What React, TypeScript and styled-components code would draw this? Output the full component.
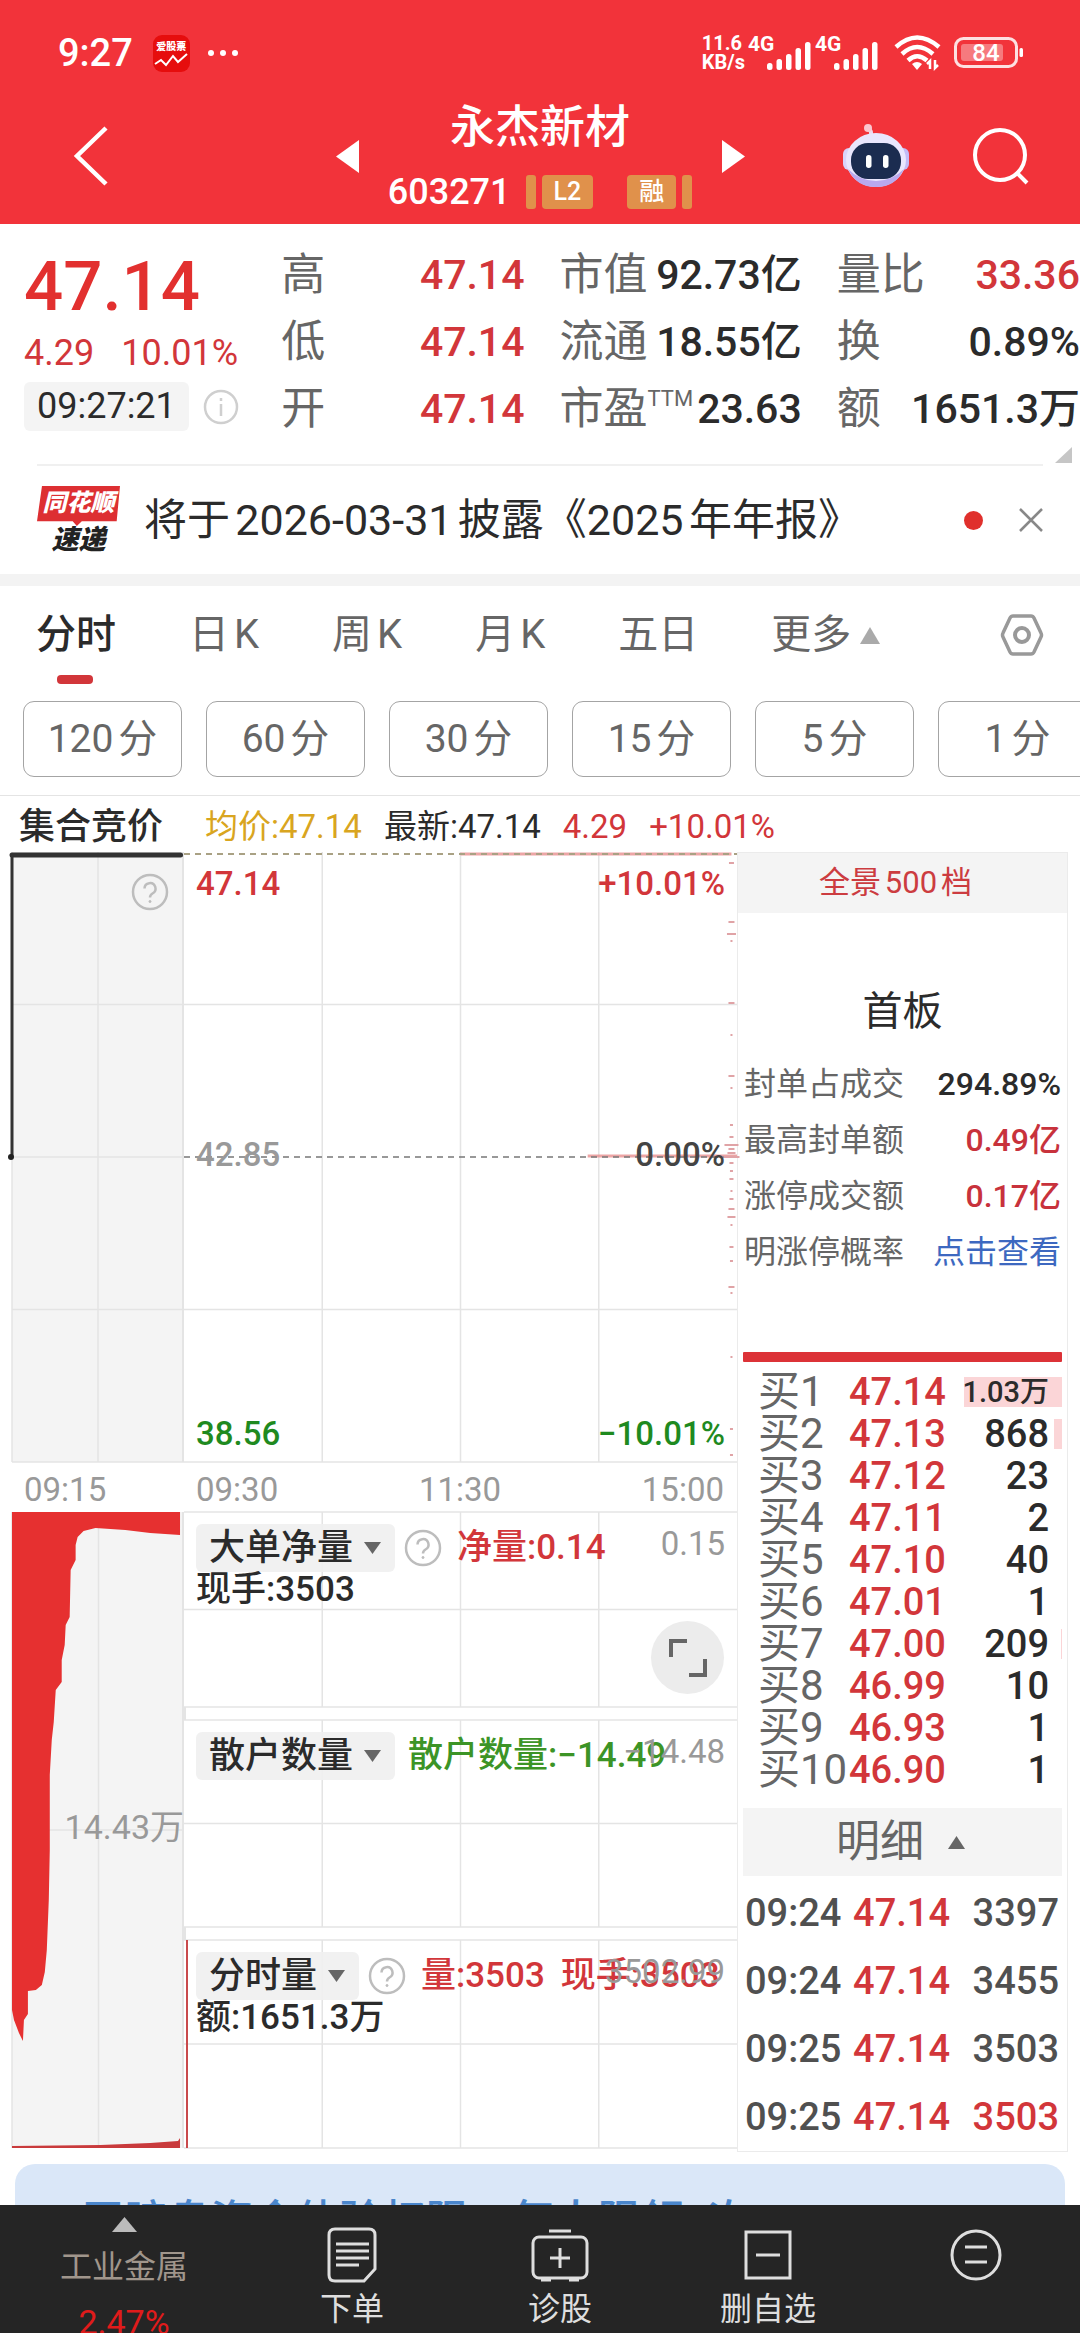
import React from "react";
import styled, { createGlobalStyle } from "styled-components";

const color = {
  brand: "#f2333a",
  up: "#d2363a",
  upStrong: "#e2302f",
  down: "#1f8a1f",
  ink: "#2b2b2b",
  text: "#505050",
  label: "#666666",
  muted: "#999999",
  line: "#e4e4e4",
  panel: "#f4f4f4",
};

const tones: Record<string, string> = {
  up: color.up,
  ink: color.ink,
  down: "#3c9426",
  text: color.text,
  muted: color.muted,
  avg: "#d9a520",
};

const GlobalStyle = createGlobalStyle`
  *, *::before, *::after { box-sizing: border-box; }
  body {
    margin: 0;
    background: #fff;
    color: ${color.ink};
    font-family: Roboto, "Noto Sans CJK SC", sans-serif;
    -webkit-font-smoothing: antialiased;
  }
  button, select { font: inherit; color: inherit; background: none; border: 0; margin: 0; padding: 0; }
  button { cursor: pointer; }
  a { text-decoration: none; }
  svg { display: block; flex: none; }
`;

const Page = styled.div`
  display: flex;
  flex-direction: column;
  min-height: 100vh;
  overflow-x: hidden;
`;

/* ---------- header ---------- */

const Header = styled.header`
  background: ${color.brand};
  color: #fff;
`;

const StatusBar = styled.div`
  display: flex;
  justify-content: space-between;
  align-items: center;
  height: 92px;
  padding: 14px 56px 0 58px;
`;

const StatusGroup = styled.div<{ $gap: number }>`
  display: flex;
  align-items: center;
  gap: ${(p) => p.$gap}px;
`;

const Clock = styled.time`
  padding-right: 3px;
  font-size: 38px;
  line-height: 40px;
  font-weight: 500;
`;

const AppBadge = styled.span`
  display: flex;
  flex-direction: column;
  align-items: center;
  width: 37px;
  height: 37px;
  padding-top: 6px;
  border-radius: 9px;
  background: #e60d0d;
  font-size: 10px;
  line-height: 12px;
  font-weight: 900;
`;

const NetSpeed = styled.span`
  font-size: 20px;
  line-height: 19px;
  font-weight: 700;
`;

const NavBar = styled.div`
  display: grid;
  grid-template-columns: 1fr auto 1fr;
  align-items: center;
  height: 132px;
  padding: 0 50px 4px;
`;

const IconButton = styled.button`
  display: flex;
  align-items: center;
  justify-content: center;
`;

const NavStart = styled.div`
  display: flex;
  padding-left: 22px;
`;

const Switcher = styled.div`
  display: grid;
  grid-template-columns: 24px 302px 24px;
  column-gap: 30px;
  align-items: center;
`;

const Heading = styled.div`
  display: flex;
  flex-direction: column;
  align-items: center;
  gap: 18px;
  padding-bottom: 2px;
`;

const Title = styled.h1`
  margin: 0;
  font-size: 45px;
  line-height: 56px;
  font-weight: 500;
`;

const CodeRow = styled.div`
  display: flex;
  align-items: center;
  gap: 6px;
  font-size: 36px;
  line-height: 36px;
`;

const Code = styled.span`
  padding-right: 9px;
  font-weight: 500;
`;

const Tag = styled.span`
  padding: 0 12px;
  border-radius: 4px;
  background: #e0914b;
  font-size: 25px;
  line-height: 34px;
  font-weight: 500;
`;

const TagEdge = styled.span`
  width: 10px;
  height: 34px;
  border-radius: 3px;
  background: #e0914b;
`;

const TagGap = styled.span`
  width: 22px;
`;

const NavActions = styled.div`
  display: flex;
  justify-content: flex-end;
  align-items: center;
  gap: 62px;
`;

/* ---------- quote ---------- */

const Quote = styled.section`
  display: grid;
  grid-template-columns: 222fr 243fr 242fr 243fr;
  column-gap: 35px;
  padding: 17px 0 5px 24px;
`;

const PriceBlock = styled.div`
  display: flex;
  flex-direction: column;
`;

const Price = styled.strong`
  font-size: 69px;
  line-height: 92px;
  font-weight: 500;
  color: ${color.upStrong};
`;

const Change = styled.div`
  display: flex;
  gap: 27px;
  font-size: 36px;
  line-height: 40px;
  color: ${color.up};
`;

const TimeRow = styled.div`
  display: flex;
  align-items: center;
  gap: 14px;
  padding-top: 9px;
`;

const TimeBox = styled.time`
  padding: 0 13px;
  border-radius: 6px;
  background: ${color.panel};
  font-size: 36px;
  line-height: 49px;
`;

const Facts = styled.dl`
  display: flex;
  flex-direction: column;
  margin: 0;
`;

const Fact = styled.div`
  display: flex;
  justify-content: space-between;
  align-items: center;
  height: 67px;
  white-space: nowrap;
`;

const FactName = styled.dt`
  display: flex;
  font-size: 44px;
  line-height: 60px;
  color: ${color.label};
`;

const Superscript = styled.sup`
  font-size: 22px;
  line-height: 40px;
`;

const FactValue = styled.dd<{ $up?: boolean }>`
  margin: 0;
  font-size: 41px;
  line-height: 60px;
  font-weight: 500;
  color: ${(p) => (p.$up ? color.up : color.ink)};
`;

const Corner = styled.div`
  display: flex;
  justify-content: flex-end;
  height: 17px;
  padding-right: 8px;
`;

/* ---------- notice ---------- */

const Notice = styled.section`
  display: flex;
  align-items: center;
  height: 110px;
  margin: 0 37px;
  border-top: 2px solid #f0f0f0;
`;

const NoticeLogo = styled.span`
  display: flex;
  flex-direction: column;
  align-items: center;
  width: 83px;
  font-style: italic;
  font-weight: 900;
`;

const LogoTop = styled.span`
  width: 83px;
  height: 40px;
  clip-path: polygon(6% 0, 100% 0, 96% 88%, 54% 88%, 48% 100%, 43% 88%, 0 88%);
  background: #dd2f32;
  color: #fff;
  font-size: 24px;
  line-height: 35px;
  text-align: center;
`;

const LogoBottom = styled.span`
  font-size: 27px;
  line-height: 28px;
  color: #222;
`;

const NoticeText = styled.p`
  flex: 1;
  margin: 0;
  padding-left: 24px;
  font-size: 43px;
  line-height: 60px;
  white-space: nowrap;
  text-autospace: normal;
`;

const Dot = styled.span`
  width: 19px;
  height: 19px;
  margin-right: 36px;
  border-radius: 50%;
  background: #e0302c;
`;

const Band = styled.div`
  height: 12px;
  background: #f3f3f3;
`;

/* ---------- tabs ---------- */

const Tabs = styled.nav`
  display: flex;
  align-items: flex-start;
  gap: 73px;
  padding: 19px 36px 0;
`;

const Tab = styled.button<{ $active?: boolean; $end?: boolean }>`
  display: flex;
  align-items: center;
  gap: 9px;
  height: 79px;
  margin-left: ${(p) => (p.$end ? "auto" : "0")};
  padding-bottom: 19px;
  position: relative;
  font-size: 40px;
  line-height: 60px;
  font-weight: ${(p) => (p.$active ? 500 : 400)};
  color: ${(p) => (p.$active ? color.ink : color.label)};
  text-autospace: normal;

  &::after {
    content: "";
    display: ${(p) => (p.$active ? "block" : "none")};
    position: absolute;
    left: calc(50% - 19px);
    bottom: 0;
    width: 36px;
    height: 9px;
    border-radius: 4px;
    background: ${color.up};
  }
`;

const Chips = styled.div`
  display: flex;
  gap: 24px;
  padding: 17px 0 18px 23px;
  overflow: hidden;
  border-bottom: 1px solid ${color.line};
`;

const Chip = styled.button`
  flex: none;
  width: 159px;
  height: 76px;
  border: 1px solid #a4a4a4;
  border-radius: 11px;
  font-size: 39px;
  line-height: 60px;
  color: ${color.label};
  text-autospace: normal;
`;

/* ---------- chart board ---------- */

const Summary = styled.div`
  display: flex;
  align-items: center;
  height: 56px;
  padding: 5px 0 0 19px;
  gap: 22px;
  font-size: 33px;
  line-height: 48px;
`;

const SummaryTitle = styled.span`
  width: 164px;
  font-size: 36px;
  font-weight: 500;
`;

const Toned = styled.span<{ $tone: string }>`
  color: ${(p) => tones[p.$tone]};
`;

const Board = styled.main`
  display: grid;
  grid-template-columns: 172fr 553fr 331fr;
  padding: 0 12px;
`;

const Column = styled.div`
  display: flex;
  flex-direction: column;
  min-width: 0;
`;

const Plot = styled.div<{ $height: number; $shaded?: boolean }>`
  position: relative;
  display: flex;
  flex-direction: column;
  height: ${(p) => p.$height}px;
  background: ${(p) => (p.$shaded ? color.panel : "#fff")};
`;

const PlotArt = styled.svg`
  position: absolute;
  inset: 0;
  width: 100%;
  height: 100%;
  overflow: visible;
`;

const AxisTimes = styled.div<{ $inset: number }>`
  display: flex;
  justify-content: space-between;
  height: 50px;
  padding: 8px 13px 0 ${(p) => p.$inset}px;
  font-size: 33px;
  line-height: 40px;
  color: ${color.muted};
`;

const PriceLabels = styled.div`
  position: relative;
  display: flex;
  flex-direction: column;
  justify-content: space-between;
  height: 100%;
  padding: 12px 12px 8px 12px;
`;

const PriceLabel = styled.div<{ $left: string; $right: string; $lift?: boolean }>`
  display: flex;
  justify-content: space-between;
  padding-bottom: ${(p) => (p.$lift ? 8 : 0)}px;
  font-size: 33px;
  line-height: 40px;
  font-weight: 500;
  color: ${(p) => p.$left};

  span:last-child {
    color: ${(p) => p.$right};
  }
`;

const HelpCorner = styled.div`
  position: relative;
  display: flex;
  justify-content: flex-end;
  padding: 21px 15px 0;
`;

const MidVolume = styled.span`
  position: relative;
  margin: auto 0;
  padding-bottom: 6px;
  font-size: 34px;
  line-height: 40px;
  text-align: right;
  color: ${color.muted};
`;

const Indicator = styled.div`
  position: relative;
  padding: 12px 13px 0 12px;
  font-size: 35px;
  line-height: 36px;
  font-weight: 500;
`;

const IndicatorRow = styled.div`
  display: flex;
  align-items: center;
  gap: 9px;
  height: 48px;
  white-space: nowrap;
`;

const Readings = styled.div<{ $indent?: boolean }>`
  display: flex;
  gap: 16px;
  padding-left: ${(p) => (p.$indent ? 6 : 4)}px;
`;

const Picker = styled.label`
  display: flex;
  align-items: center;
  gap: 10px;
  height: 48px;
  padding: 0 14px 0 13px;
  border-radius: 6px;
  background: rgba(240, 240, 240, 0.9);
`;

const PickerSelect = styled.select`
  appearance: none;
  font-size: 36px;
  line-height: 48px;
  outline: none;
`;

const Scale = styled.span`
  position: absolute;
  top: 12px;
  right: 12px;
  font-size: 33px;
  line-height: 40px;
  font-weight: 400;
  color: ${color.muted};
`;

const Expand = styled.button`
  position: absolute;
  right: 13px;
  top: 109px;
  display: flex;
  align-items: center;
  justify-content: center;
  width: 73px;
  height: 73px;
  border-radius: 50%;
  background: #ececec;
`;

const PanelGap = styled.div`
  height: 13px;
`;

/* ---------- order book ---------- */

const Side = styled.aside`
  display: flex;
  flex-direction: column;
  border: 1px solid #ebebeb;
`;

const DepthButton = styled.button`
  height: 60px;
  padding-right: 14px;
  background: ${color.panel};
  font-size: 31px;
  line-height: 60px;
  color: #cc3c40;
  text-autospace: normal;
`;

const SideTitle = styled.h2`
  margin: 0;
  padding: 69px 0 14px;
  font-size: 40px;
  line-height: 60px;
  font-weight: 400;
  text-align: center;
`;

const LimitStats = styled.dl`
  margin: 0;
  padding: 0 6px 72px;
`;

const LimitStat = styled.div`
  display: flex;
  justify-content: space-between;
  font-size: 32px;
  line-height: 56px;
  white-space: nowrap;
`;

const LimitName = styled.dt`
  color: ${color.label};
`;

const LimitValue = styled.dd<{ $up?: boolean }>`
  margin: 0;
  font-weight: 500;
  color: ${(p) => (p.$up ? "#c8323c" : color.ink)};
`;

const LimitLink = styled.a`
  font-weight: 400;
  color: #3d68c0;
`;

const Ratio = styled.div`
  height: 10px;
  margin: 0 5px;
  border-radius: 1px;
  background: #dc3237;
`;

const Book = styled.table`
  margin: 9px 5px 0;
  border-collapse: collapse;
`;

const Cell = styled.td<{ $tone: string; $align?: string; $size?: number; $pad?: number; $height: number }>`
  padding: 0 ${(p) => p.$pad ?? 0}px 0 0;
  height: ${(p) => p.$height}px;
  font-size: ${(p) => p.$size ?? 38}px;
  line-height: ${(p) => p.$height}px;
  font-weight: 500;
  text-align: ${(p) => p.$align ?? "left"};
  color: ${(p) => tones[p.$tone]};
  white-space: nowrap;
`;

const LevelCell = styled.th`
  width: 106px;
  padding: 0 0 0 15px;
  font-size: 42px;
  line-height: 42px;
  font-weight: 400;
  text-align: left;
  color: ${color.label};
  white-space: nowrap;
`;

const VolumeCell = styled(Cell)<{ $fill: number }>`
  background: linear-gradient(#fbd5d7, #fbd5d7) right center / ${(p) => p.$fill}px 30px no-repeat;
`;

const DetailButton = styled.button`
  display: flex;
  align-items: center;
  justify-content: center;
  gap: 24px;
  height: 68px;
  margin: 17px 5px 3px;
  padding-right: 4px;
  background: ${color.panel};
  font-size: 44px;
  line-height: 60px;
  color: ${color.label};
`;

const Trades = styled.table`
  margin: 0 5px 0 7px;
  border-collapse: collapse;
`;

/* ---------- promo + footer ---------- */

const Promo = styled.section`
  display: flex;
  align-items: center;
  justify-content: space-between;
  height: 114px;
  margin: 12px 15px 0;
  padding: 0 38px 0 42px;
  border-radius: 20px;
  background: #dae7f8;
  font-size: 43px;
  line-height: 60px;
  font-weight: 500;
  color: #4a86cc;
`;

const Footer = styled.footer`
  position: fixed;
  inset: auto 0 0 0;
  display: grid;
  grid-template-columns: 248fr 208fr 208fr 208fr 208fr;
  height: 128px;
  overflow: hidden;
  background: #252525;
  color: #dedede;
`;

const FooterItem = styled.button`
  display: flex;
  flex-direction: column;
  align-items: center;
  gap: 4px;
  padding-top: 22px;
  font-size: 32px;
  line-height: 44px;
`;

const Sector = styled.a`
  display: flex;
  flex-direction: column;
  align-items: center;
  padding-top: 12px;
  font-size: 32px;
  line-height: 55px;
  color: #a0968c;
`;

const SectorName = styled.span`
  padding-top: 8px;
`;

const SectorChange = styled.span`
  font-size: 34px;
  color: #e01b1b;
`;

/* ---------- drawings ---------- */

const Signal = () => (
  <svg width="64" height="40" viewBox="0 -4 64 40">
    <text x="0" y="14" fontSize="21" fontWeight="700" fill="#fff">4G</text>
    {[7, 11, 16, 22, 28].map((h, i) => (
      <rect key={h} x={19 + i * 9.5} y={33 - h} width="5.5" height={h} rx="2.5" fill="#fff" />
    ))}
  </svg>
);

const Wifi = () => (
  <svg width="48" height="36" viewBox="0 0 48 36" fill="none" stroke="#fff" strokeWidth="4.500">
    <path d="M2 12Q23-7 45 12" />
    <path d="M8 19Q23 5 39 19" />
    <path d="M14 25.500Q23 17 33 25.500" />
    <path d="M23 35l-5-6q5-4 10 0z" fill="#fff" stroke="none" />
    <path d="M36 34v-8l-3 3M41 25v8l3-3" strokeWidth="2.500" />
  </svg>
);

const Battery = () => (
  <svg width="70" height="32" viewBox="0 0 70 32">
    <rect x="1.500" y="1.500" width="61" height="28" rx="8" fill="none" stroke="#fff" strokeWidth="3" opacity=".85" />
    <rect x="7" y="7" width="42" height="17" rx="3" fill="#fff" opacity=".35" />
    <rect x="65.500" y="11" width="3.500" height="9" rx="1.500" fill="#fff" />
    <text x="32" y="24" fontSize="24" fontWeight="500" fill="#fff" textAnchor="middle">84</text>
  </svg>
);

const Robot = () => (
  <svg width="68" height="64" viewBox="0 0 68 64">
    <path d="M29 14q1-8-3-10" fill="none" stroke="#f0d8ec" strokeWidth="4" />
    <circle cx="26" cy="4" r="4" fill="#fbc6cf" />
    <rect x="1" y="24" width="12" height="22" rx="6" fill="#d9d3fb" />
    <rect x="55" y="24" width="12" height="22" rx="6" fill="#c3bbf6" />
    <ellipse cx="34" cy="36" rx="30" ry="27" fill="#e9e6fd" />
    <path d="M6 45q8 18 28 18t28-18q-12 12-28 12T6 45z" fill="#b9a9ee" />
    <rect x="9" y="19" width="50" height="36" rx="17" fill="#1b2c50" />
    <rect x="24" y="31" width="5.500" height="13" rx="2.700" fill="#fff" />
    <rect x="41" y="31" width="5.500" height="13" rx="2.700" fill="#fff" />
  </svg>
);

const Triangle = ({ w, h, dir, fill }: { w: number; h: number; dir: string; fill: string }) => {
  const points: Record<string, string> = {
    up: `0,${h} ${w / 2},0 ${w},${h}`,
    down: `0,0 ${w},0 ${w / 2},${h}`,
    left: `${w},0 0,${h / 2} ${w},${h}`,
    right: `0,0 ${w},${h / 2} 0,${h}`,
    corner: `0,${h} ${w},0 ${w},${h}`,
  };
  return (
    <svg width={w} height={h}>
      <polygon points={points[dir]} fill={fill} />
    </svg>
  );
};

const Help = () => (
  <svg width="38" height="38" viewBox="0 0 38 38" fill="none" stroke="#bdbdbd" strokeWidth="2.500">
    <circle cx="19" cy="19" r="17" />
    <path d="M13.500 15.500a5.500 5.500 0 1 1 8 5q-2.500 1.500-2.500 4" />
    <circle cx="19" cy="28.500" r="1" fill="#bdbdbd" strokeWidth="1" />
  </svg>
);

const Cross = ({ size, stroke }: { size: number; stroke: string }) => (
  <svg width={size} height={size} viewBox="0 0 24 24" fill="none" stroke={stroke} strokeWidth="2.500">
    <path d="M1 1l22 22M23 1L1 23" />
  </svg>
);

const GridLines = ({ rows, cols, edge }: { rows: number[]; cols: number[]; edge?: boolean }) => (
  <g stroke={color.line} strokeWidth="1.500">
    {rows.map((y) => (
      <line key={`r${y}`} x1="0" x2="100%" y1={`${y}%`} y2={`${y}%`} />
    ))}
    {cols.map((x) => (
      <line key={`c${x}`} x1={`${x}%`} x2={`${x}%`} y1="0" y2="100%" />
    ))}
    {edge && <line x1="100%" x2="100%" y1="0" y2="100%" strokeWidth="4" />}
  </g>
);

/* ---------- data ---------- */

const facts = [
  [["高", "", "47.14", true], ["低", "", "47.14", true], ["开", "", "47.14", true]],
  [["市值", "", "92.73亿", false], ["流通", "", "18.55亿", false], ["市盈", "TTM", "23.63", false]],
  [["量比", "", "33.36", true], ["换", "", "0.89%", false], ["额", "", "1651.3万", false]],
] as [string, string, string, boolean][][];

const bids: [string, string, string, number][] = [
  ["买1", "47.14", "1.03万", 98],
  ["买2", "47.13", "868", 8],
  ["买3", "47.12", "23", 0],
  ["买4", "47.11", "2", 0],
  ["买5", "47.10", "40", 0],
  ["买6", "47.01", "1", 0],
  ["买7", "47.00", "209", 1],
  ["买8", "46.99", "10", 0],
  ["买9", "46.93", "1", 0],
  ["买10", "46.90", "1", 0],
];

const trades: [string, string, string, string][] = [
  ["09:24", "47.14", "3397", "text"],
  ["09:24", "47.14", "3455", "text"],
  ["09:25", "47.14", "3503", "text"],
  ["09:25", "47.14", "3503", "up"],
];

/* Faint marks along the right edge of the price plot: y position and length. */
const ticks = [
  [10, 5], [69, 6], [81, 9], [88, 2], [150, 6], [182, 2], [223, 6], [235, 2], [272, 3], [284, 4],
  [292, 14], [296, 6], [300, 8], [304, 16], [310, 4], [318, 3], [326, 4], [338, 2], [346, 4],
  [356, 6], [364, 8], [372, 2], [394, 4], [408, 3], [434, 6], [440, 2], [504, 2], [576, 3], [602, 3],
];

const IndicatorPicker = ({ name, options }: { name: string; options: string[] }) => (
  <Picker>
    <PickerSelect aria-label={name} defaultValue={options[0]}>
      {options.map((o) => (
        <option key={o}>{o}</option>
      ))}
    </PickerSelect>
    <Triangle w={17} h={12} dir="down" fill="#666" />
  </Picker>
);

export default function App() {
  return (
    <Page>
      <GlobalStyle />
      <Header>
        <StatusBar>
          <StatusGroup $gap={17}>
            <Clock>9:27</Clock>
            <AppBadge>
              爱股票
              <svg width="35" height="15" viewBox="0 0 35 15" fill="none" stroke="#fff" strokeWidth="2">
                <path d="M1 11l6-4 5 5 7-9 5 6 9-8" />
              </svg>
            </AppBadge>
            <svg width="32" height="8" fill="#fff">
              <circle cx="4" cy="4" r="3" />
              <circle cx="16" cy="4" r="3" />
              <circle cx="28" cy="4" r="3" />
            </svg>
          </StatusGroup>
          <StatusGroup $gap={3}>
            <NetSpeed>
              11.6
              <br />
              KB/s
            </NetSpeed>
            <Signal />
            <Signal />
            <StatusGroup $gap={12}>
              <span />
              <Wifi />
              <Battery />
            </StatusGroup>
          </StatusGroup>
        </StatusBar>
        <NavBar>
          <NavStart>
            <IconButton aria-label="返回">
              <svg width="38" height="60" viewBox="0 0 38 60" fill="none" stroke="#fff" strokeWidth="4.500">
                <path d="M34 2L5 30l29 28" />
              </svg>
            </IconButton>
          </NavStart>
          <Switcher>
            <IconButton aria-label="上一只">
              <Triangle w={23} h={33} dir="left" fill="#fff" />
            </IconButton>
            <Heading>
              <Title>永杰新材</Title>
              <CodeRow>
                <Code>603271</Code>
                <TagEdge />
                <Tag>L2</Tag>
                <TagGap />
                <Tag>融</Tag>
                <TagEdge />
              </CodeRow>
            </Heading>
            <IconButton aria-label="下一只">
              <Triangle w={23} h={33} dir="right" fill="#fff" />
            </IconButton>
          </Switcher>
          <NavActions>
            <IconButton aria-label="智能助手">
              <Robot />
            </IconButton>
            <IconButton aria-label="搜索">
              <svg width="58" height="58" viewBox="0 0 58 58" fill="none" stroke="#fff" strokeWidth="4">
                <circle cx="28" cy="28" r="25" />
                <path d="M44 45l11 11" />
              </svg>
            </IconButton>
          </NavActions>
        </NavBar>
      </Header>

      <Quote>
        <PriceBlock>
          <Price>47.14</Price>
          <Change>
            <span>4.29</span>
            <span>10.01%</span>
          </Change>
          <TimeRow>
            <TimeBox>09:27:21</TimeBox>
            <svg width="36" height="36" viewBox="0 0 36 36" fill="none" stroke="#cfcfcf" strokeWidth="2.500">
              <circle cx="18" cy="18" r="16" />
              <path d="M18 15v12M18 9v3" />
            </svg>
          </TimeRow>
        </PriceBlock>
        {facts.map((group, i) => (
          <Facts key={i}>
            {group.map(([name, sup, value, up]) => (
              <Fact key={name}>
                <FactName>
                  {name}
                  {sup && <Superscript>{sup}</Superscript>}
                </FactName>
                <FactValue $up={up}>{value}</FactValue>
              </Fact>
            ))}
          </Facts>
        ))}
      </Quote>
      <Corner>
        <Triangle w={17} h={16} dir="corner" fill="#c6c6c6" />
      </Corner>

      <Notice>
        <NoticeLogo>
          <LogoTop>同花顺</LogoTop>
          <LogoBottom>速递</LogoBottom>
        </NoticeLogo>
        <NoticeText>将于2026-03-31披露《2025年年报》</NoticeText>
        <Dot />
        <IconButton aria-label="关闭">
          <Cross size={24} stroke="#888" />
        </IconButton>
      </Notice>
      <Band />

      <Tabs>
        <Tab $active>分时</Tab>
        <Tab>日K</Tab>
        <Tab>周K</Tab>
        <Tab>月K</Tab>
        <Tab>五日</Tab>
        <Tab>
          更多
          <Triangle w={20} h={17} dir="up" fill="#aaa" />
        </Tab>
        <Tab $end aria-label="设置">
          <svg width="44" height="42" viewBox="0 0 44 42" fill="none" stroke="#999" strokeWidth="4">
            <path d="M13 2h18q2 0 3 2l7 15q1 2 0 4l-7 15q-1 2-3 2H13q-2 0-3-2L3 23q-1-2 0-4l7-15q1-2 3-2z" strokeWidth="3.500" />
            <circle cx="22" cy="21" r="7" />
          </svg>
        </Tab>
      </Tabs>
      <Chips>
        {["120分", "60分", "30分", "15分", "5分", "1分"].map((c) => (
          <Chip key={c}>{c}</Chip>
        ))}
      </Chips>

      <Summary>
        <SummaryTitle>集合竞价</SummaryTitle>
        <Toned $tone="avg">均价:47.14</Toned>
        <Toned $tone="ink">最新:47.14</Toned>
        <Toned $tone="up">4.29</Toned>
        <Toned $tone="up">+10.01%</Toned>
      </Summary>

      <Board>
        <Column>
          <Plot $height={610} $shaded>
            <PlotArt>
              <GridLines rows={[25, 50, 75, 100]} cols={[0, 50]} edge />
              <line x1="0" x2="98%" y1="3" y2="3" stroke="#333" strokeWidth="5" strokeLinecap="round" />
              <line x1="0" x2="0" y1="3" y2="50%" stroke="#333" strokeWidth="3" />
              <circle cx="-1" cy="50%" r="3" fill="#222" />
            </PlotArt>
            <HelpCorner>
              <Help />
            </HelpCorner>
          </Plot>
          <AxisTimes $inset={12}>
            <span>09:15</span>
          </AxisTimes>
          <Plot $height={636} $shaded>
            <PlotArt viewBox="0 0 173 636" preserveAspectRatio="none">
              <g stroke={color.line} strokeWidth="1.500">
                <path d="M0 0V636M87 0V636M0 318H173" />
                <path d="M173 0V636" strokeWidth="4" />
              </g>
              <path
                d="M0 0H169V23L139 21 114 18 84 16 72 19 66 25 64 33V48L59 58 58 105 54 113 53 133 50 148V170L44 178 42 210 40 228 38 263V338L37 388 35 438 33 460 30 473 24 478 16 479V502L12 508 11 529 7 521 2 508 0 498z"
                fill="#e63030"
              />
              <path d="M0 636V634L89 633 139 631 167 629 169 626V636z" fill="#c93a3c" />
            </PlotArt>
            <MidVolume>14.43万</MidVolume>
          </Plot>
        </Column>

        <Column>
          <Plot $height={610}>
            <PlotArt>
              <GridLines rows={[25, 75, 100]} cols={[25, 50, 75]} />
              <g stroke="#e98f8f" strokeWidth="3" opacity=".8">
                <line x1="50%" x2="99%" y1="2" y2="2" />
                <line x1="73%" x2="100%" y1="304" y2="304" />
              </g>
              <line x1="0" x2="100%" y1="2" y2="2" stroke="#a9a184" strokeWidth="2" strokeDasharray="6 5" />
              <line x1="0" x2="100%" y1="50%" y2="50%" stroke="#777" strokeWidth="1.500" strokeDasharray="6 5" />
              <svg x="99%" overflow="visible">
                {ticks.map(([y, w]) => (
                  <rect key={y} x={-w / 2} y={y} width={w} height="2" fill="#e0a3a6" />
                ))}
              </svg>
            </PlotArt>
            <PriceLabels>
              <PriceLabel $left={color.up} $right={color.up}>
                <span>47.14</span>
                <span>+10.01%</span>
              </PriceLabel>
              <PriceLabel $left={color.muted} $right="#444" $lift>
                <span>42.85</span>
                <span>0.00%</span>
              </PriceLabel>
              <PriceLabel $left={color.down} $right={color.down}>
                <span>38.56</span>
                <span>−10.01%</span>
              </PriceLabel>
            </PriceLabels>
          </Plot>
          <AxisTimes $inset={12}>
            <span>09:30</span>
            <span>11:30</span>
            <span>15:00</span>
          </AxisTimes>

          <Plot $height={195}>
            <PlotArt>
              <GridLines rows={[0, 50, 100]} cols={[25, 50, 75]} />
            </PlotArt>
            <Indicator>
              <Scale>0.15</Scale>
              <IndicatorRow>
                <IndicatorPicker name="指标一" options={["大单净量", "大单金额"]} />
                <Help />
                <Readings $indent>
                  <Toned $tone="up">净量:0.14</Toned>
                </Readings>
              </IndicatorRow>
              <Toned $tone="ink">现手:3503</Toned>
            </Indicator>
            <Expand aria-label="全屏">
              <svg width="38" height="38" viewBox="0 0 38 38" fill="none" stroke="#666" strokeWidth="4">
                <path d="M2 18V2h16M36 20v16H20" />
              </svg>
            </Expand>
          </Plot>
          <PanelGap />
          <Plot $height={207}>
            <PlotArt>
              <GridLines rows={[0, 50, 100]} cols={[25, 50, 75]} />
            </PlotArt>
            <Indicator>
              <Scale>−14.48</Scale>
              <IndicatorRow>
                <IndicatorPicker name="指标二" options={["散户数量", "资金流向"]} />
                <Readings>
                  <Toned $tone="down">散户数量:−14.49</Toned>
                </Readings>
              </IndicatorRow>
            </Indicator>
          </Plot>
          <PanelGap />
          <Plot $height={208}>
            <PlotArt>
              <GridLines rows={[0, 50, 100]} cols={[25, 50, 75]} />
              <line x1="3" x2="3" y1="0" y2="100%" stroke="#c94a4c" strokeWidth="2" />
            </PlotArt>
            <Indicator>
              <Scale>3502.99</Scale>
              <IndicatorRow>
                <IndicatorPicker name="指标三" options={["分时量", "成交额"]} />
                <Help />
                <Readings $indent>
                  <Toned $tone="up">量:3503</Toned>
                  <Toned $tone="up">现手:3503</Toned>
                </Readings>
              </IndicatorRow>
              <Toned $tone="ink">额:1651.3万</Toned>
            </Indicator>
          </Plot>
        </Column>

        <Side>
          <DepthButton>全景500档</DepthButton>
          <SideTitle>首板</SideTitle>
          <LimitStats>
            <LimitStat>
              <LimitName>封单占成交</LimitName>
              <LimitValue>294.89%</LimitValue>
            </LimitStat>
            <LimitStat>
              <LimitName>最高封单额</LimitName>
              <LimitValue $up>0.49亿</LimitValue>
            </LimitStat>
            <LimitStat>
              <LimitName>涨停成交额</LimitName>
              <LimitValue $up>0.17亿</LimitValue>
            </LimitStat>
            <LimitStat>
              <LimitName>明涨停概率</LimitName>
              <LimitValue>
                <LimitLink href="#probability">点击查看</LimitLink>
              </LimitValue>
            </LimitStat>
          </LimitStats>
          <Ratio />
          <Book>
            <tbody>
              {bids.map(([level, price, size, fill], i) => (
                <tr key={level}>
                  <LevelCell scope="row">{level}</LevelCell>
                  <Cell $tone="up" $height={42}>{price}</Cell>
                  <VolumeCell $tone="ink" $height={42} $align="right" $pad={13} $size={i === 0 ? 29 : 38} $fill={fill}>
                    {size}
                  </VolumeCell>
                </tr>
              ))}
            </tbody>
          </Book>
          <DetailButton>
            明细
            <Triangle w={17} h={13} dir="up" fill="#666" />
          </DetailButton>
          <Trades>
            <tbody>
              {trades.map(([time, price, size, tone], i) => (
                <tr key={i}>
                  <Cell $tone="text" $height={68}>{time}</Cell>
                  <Cell $tone="up" $height={68}>{price}</Cell>
                  <Cell $tone={tone} $height={68} $align="right" $pad={3}>{size}</Cell>
                </tr>
              ))}
            </tbody>
          </Trades>
        </Side>
      </Board>

      <Promo>
        <span>5天暗盘资金体验权限，每人限领1次</span>
        <Cross size={32} stroke="#7fa4d4" />
      </Promo>

      <Footer>
        <Sector href="#sector">
          <Triangle w={25} h={15} dir="up" fill="#bbb" />
          <SectorName>工业金属</SectorName>
          <SectorChange>2.47%</SectorChange>
        </Sector>
        <FooterItem>
          <svg width="50" height="56" viewBox="0 0 50 56" fill="none" stroke="#dedede" strokeWidth="3">
            <path d="M8 2h34q6 0 6 6v34L37 54H8q-6 0-6-6V8q0-6 6-6z" />
            <path d="M9 17h33M9 24h33M9 31h33M9 38h23" />
          </svg>
          下单
        </FooterItem>
        <FooterItem>
          <svg width="58" height="56" viewBox="0 0 58 56" fill="none" stroke="#dedede" strokeWidth="3">
            <rect x="2" y="10" width="54" height="41" rx="6" />
            <path d="M18 4h22M29 21v20M19 31h20M10 53h10M38 53h10" />
          </svg>
          诊股
        </FooterItem>
        <FooterItem>
          <svg width="48" height="56" viewBox="0 0 48 56" fill="none" stroke="#dedede" strokeWidth="3">
            <rect x="2" y="5" width="44" height="46" />
            <path d="M12 28h24" />
          </svg>
          删自选
        </FooterItem>
        <FooterItem aria-label="更多功能">
          <svg width="52" height="56" viewBox="0 0 52 56" fill="none" stroke="#dedede" strokeWidth="3">
            <circle cx="26" cy="28" r="24" />
            <path d="M15 20h22M15 35h22" />
          </svg>
        </FooterItem>
      </Footer>
    </Page>
  );
}
